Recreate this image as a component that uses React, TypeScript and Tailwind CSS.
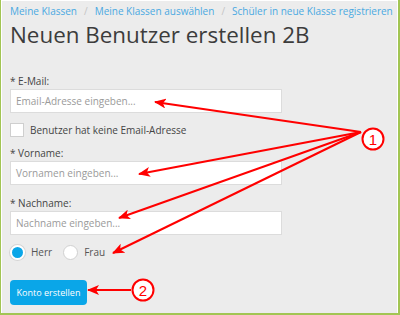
const font = { fontFamily: '"Open Sans", "Liberation Sans", sans-serif' }

const Field = ({ label, placeholder, mt }: { label: string; placeholder: string; mt: string }) => (
  <>
    <div className={`${mt} h-[14px] leading-[14px] text-[10px] text-[#444]`}>{label}</div>
    <div className="mt-px w-[272px] h-[24px] bg-white border border-[#dcdcdc] flex items-center px-[5px] text-[10px] text-[#9a9a9a]">
      {placeholder}
    </div>
  </>
)

const Annotations = () => {
  const from = { x: 360, y: 132 }
  const tips = [
    { x: 154, y: 102 },
    { x: 138, y: 174 },
    { x: 118, y: 218 },
    { x: 112, y: 253 },
  ]
  return (
    <svg className="absolute inset-0 pointer-events-none" width="400" height="315" viewBox="0 0 400 315">
      <defs>
        <marker id="head" markerUnits="userSpaceOnUse" markerWidth="12" markerHeight="10" refX="11" refY="5" orient="auto">
          <path d="M0,0 L12,5 L0,10 L3,5 Z" fill="#ff0000" />
        </marker>
      </defs>
      {tips.map((t, i) => (
        <line key={i} x1={from.x} y1={from.y} x2={t.x} y2={t.y} stroke="#ff0000" strokeWidth="2" markerEnd="url(#head)" />
      ))}
      <line x1="130" y1="290" x2="87" y2="290" stroke="#ff0000" strokeWidth="2" markerEnd="url(#head)" />
      <circle cx="372" cy="139" r="10.5" fill="white" stroke="#ff0000" strokeWidth="2" />
      <text x="372" y="144.5" textAnchor="middle" fontSize="15" fill="#ff0000" fontFamily="Liberation Sans, sans-serif">1</text>
      <circle cx="142" cy="290" r="10.5" fill="white" stroke="#ff0000" strokeWidth="2" />
      <text x="142" y="295.5" textAnchor="middle" fontSize="15" fill="#ff0000" fontFamily="Liberation Sans, sans-serif">2</text>
    </svg>
  )
}

export default function App() {
  return (
    <div className="relative w-[400px] h-[315px] border-l border-r-2 border-b-2 border-[#a2c553] bg-white overflow-hidden" style={font}>
      <div className="h-full ml-px mr-px mb-px mt-px bg-[#ececec] pl-2 flex flex-col">
        {/* breadcrumb */}
        <div className="mt-[3px] h-[14px] leading-[14px] text-[10px] text-[#4aa9e2] flex gap-[7px] whitespace-nowrap">
          <span>Meine Klassen</span>
          <span className="text-[#c4c4c4]">/</span>
          <span>Meine Klassen auswählen</span>
          <span className="text-[#c4c4c4]">/</span>
          <span>Schüler in neue Klasse registrieren</span>
        </div>
        <h1 className="mt-[2px] h-[30px] leading-[30px] text-[22.4px] text-[#3c3c3c] whitespace-nowrap">Neuen Benutzer erstellen 2B</h1>

        <Field label="* E-Mail:" placeholder="Email-Adresse eingeben..." mt="mt-[24px]" />

        <div className="mt-[10px] h-[14px] flex items-center gap-[6px] text-[10px] text-[#444]">
          <span className="w-[14px] h-[14px] bg-white border border-[#cfcfcf]" />
          <span>Benutzer hat keine Email-Adresse</span>
        </div>

        <Field label="* Vorname:" placeholder="Vornamen eingeben..." mt="mt-[9px]" />
        <Field label="* Nachname:" placeholder="Nachname eingeben..." mt="mt-[11px]" />

        {/* radios */}
        <div className="mt-[10px] h-[15px] flex items-center text-[10px] text-[#555]">
          <span className="w-[15px] h-[15px] rounded-full bg-[#0aa6e8] border-2 border-white shadow-[0_0_0_1px_#d5d5d5]" />
          <span className="ml-[6px]">Herr</span>
          <span className="ml-[11px] w-[15px] h-[15px] rounded-full bg-white border border-[#d0d0d0]" />
          <span className="ml-[6px]">Frau</span>
        </div>

        <button className="mt-[20px] w-[77px] h-[25px] rounded-[4px] bg-[#0aa6e8] text-white text-[9px] leading-none">
          Konto erstellen
        </button>
      </div>
      <Annotations />
    </div>
  )
}
